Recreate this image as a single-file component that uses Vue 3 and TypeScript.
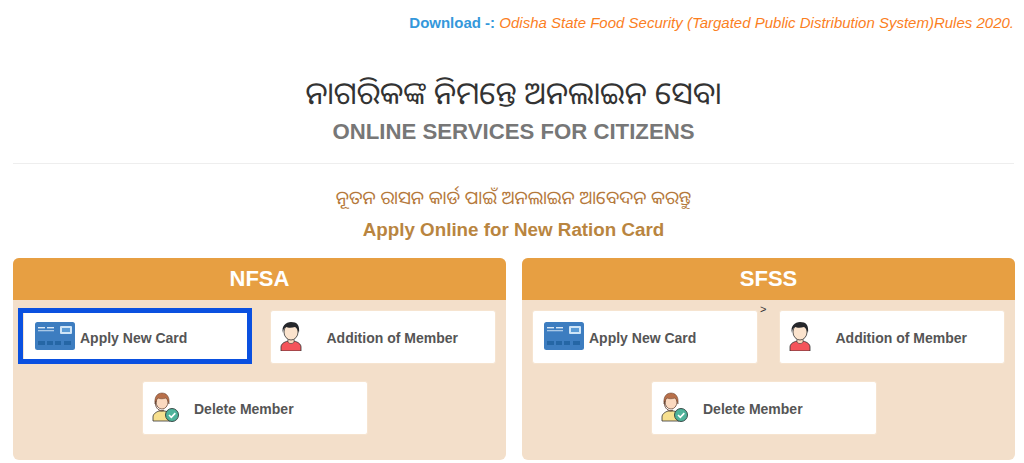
<script setup lang="ts">
interface Item { label: string; icon: 'card' | 'man' | 'agent'; textGap: number; focused?: boolean }
interface Panel { title: string; items: Item[]; caret?: boolean }
const base: Item[] = [
  { label: 'Apply New Card', icon: 'card', textGap: 5 },
  { label: 'Addition of Member', icon: 'man', textGap: 25 },
  { label: 'Delete Member', icon: 'agent', textGap: 15 },
]
const panels: Panel[] = [
  { title: 'NFSA', items: base.map((b, i) => ({ ...b, focused: i === 0 })) },
  { title: 'SFSS', items: base, caret: true },
]
</script>

<template>
  <main class="page">
    <p class="download"><b>Download -:</b> <i>Odisha State Food Security (Targated Public Distribution System)Rules 2020.</i></p>
    <h1 class="odia-title">ନାଗରିକଙ୍କ ନିମନ୍ତେ ଅନଲାଇନ ସେବା</h1>
    <h2 class="subtitle">ONLINE SERVICES FOR CITIZENS</h2>
    <hr class="rule" />
    <h3 class="odia-sub">ନୂତନ ରାସନ କାର୍ଡ ପାଇଁ ଅନଲାଇନ ଆବେଦନ କରନ୍ତୁ</h3>
    <h3 class="apply">Apply Online for New Ration Card</h3>
    <section class="panels">
      <article v-for="p in panels" :key="p.title" class="panel">
        <header class="panel-head">{{ p.title }}</header>
        <div class="panel-body">
          <span v-if="p.caret" class="caret">&gt;</span>
          <a v-for="item in p.items" :key="item.label" class="tile" :class="{ focused: item.focused }">
            <svg v-if="item.icon === 'card'" class="icon" width="40" height="28" viewBox="0 0 40 28">
              <rect x="0" y="0" width="40" height="28" rx="2.5" fill="#3d7dc0" />
              <rect x="3" y="5" width="7" height="1.4" fill="#dbe8f5" />
              <rect x="12" y="5" width="7" height="1.4" fill="#dbe8f5" />
              <rect x="3" y="8" width="16" height="1.3" fill="#a9c8e6" />
              <rect x="25" y="4" width="12" height="8" rx="1" fill="#cfe5f7" />
              <rect x="27" y="6" width="8" height="4" fill="#5b9bd5" />
              <rect x="3" y="19" width="7" height="4" fill="#2566a5" />
              <rect x="12" y="19" width="6" height="4" fill="#2566a5" />
              <rect x="20" y="19" width="6" height="4" fill="#2566a5" />
              <rect x="29" y="19" width="7" height="4" fill="#2566a5" />
            </svg>
            <svg v-else-if="item.icon === 'man'" class="icon shifted" width="22" height="29" viewBox="0 0 22 29">
              <path d="M1 29v-4c0-3 3-5 7-6h6c4 1 7 3 7 6v4z" fill="#f4545a" stroke="#333" stroke-width=".8" />
              <path d="M8 16h6v4c-1 2-5 2-6 0z" fill="#fbdcc0" stroke="#333" stroke-width=".6" />
              <ellipse cx="11" cy="10" rx="7" ry="8" fill="#fbe3cd" stroke="#333" stroke-width=".8" />
              <path d="M3 11C1 4 6 0 11 0c6 0 9 3 8 11-1-3-2-5-4-6-3 1-7 1-9 0-2 1-3 3-3 6z" fill="#25272b" />
            </svg>
            <svg v-else class="icon shifted" width="27" height="30" viewBox="0 0 27 30">
              <path d="M1 29v-4c0-3 3-5 6-6h6c3 1 5 3 5 6v4z" fill="#f7e08f" stroke="#333" stroke-width=".8" />
              <ellipse cx="10" cy="10" rx="6" ry="7" fill="#fbd9bf" stroke="#5b3a2a" stroke-width=".7" />
              <path d="M3 12C2 4 6 1 10 1s8 3 7 11c-1-3-2-5-3-6-3 1-6 1-8 0-1 1-2 3-3 6z" fill="#b8704a" stroke="#5b3a2a" stroke-width=".5" />
              <path d="M4 9c-1 4 0 7 3 9 2 1 4 1 5 0" fill="none" stroke="#5b3a2a" stroke-width=".9" />
              <circle cx="20" cy="23" r="6.5" fill="#4fb39b" stroke="#2d3b3a" stroke-width=".9" />
              <path d="M17 23l2.3 2.3 4-4.2" fill="none" stroke="#fff" stroke-width="1.6" />
            </svg>
            <span class="label" :style="{ marginLeft: item.textGap + 'px' }">{{ item.label }}</span>
          </a>
        </div>
      </article>
    </section>
  </main>
</template>

<style scoped>
.page {
  box-sizing: border-box;
  width: 1024px;
  height: 463px;
  overflow: hidden;
  padding: 14px 10px 0 13px;
  background: #fff;
  font-family: "Liberation Sans", Arial, sans-serif;
  text-align: center;
}
.download {
  margin: 0;
  font-size: 15px;
  line-height: 18px;
  text-align: right;
  color: #fb7f1f;
}
.download b { color: #3498db; }
.odia-title {
  margin: 38px 0 0;
  font-size: 31px;
  line-height: 44px;
  font-weight: 400;
  color: #333;
  font-family: "Noto Sans Oriya", "Noto Sans", "Liberation Sans", sans-serif;
}
.subtitle {
  margin: 6px 0 0;
  font-size: 22.2px;
  line-height: 24px;
  color: #777;
}
.rule {
  margin: 19px 0 0;
  border: 0;
  border-top: 1px solid #eee;
}
.odia-sub {
  margin: 19px 0 0;
  font-size: 18.5px;
  line-height: 28px;
  font-weight: 400;
  color: #b5793b;
  font-family: "Noto Sans Oriya", "Noto Sans", "Liberation Sans", sans-serif;
}
.apply {
  margin: 8px 0 0;
  font-size: 18.8px;
  line-height: 22px;
  color: #b9853f;
}
.panels {
  display: flex;
  gap: 16px;
  margin-top: 17px;
  width: 1002px;
}
.panel {
  flex: 0 0 493px;
  height: 202px;
  border-radius: 6px;
  overflow: hidden;
  background: #f3dfca;
}
.panel-head {
  height: 42px;
  line-height: 41px;
  background: #e79f42;
  color: #fff;
  font-size: 22px;
  font-weight: 700;
}
.panel-body {
  position: relative;
  display: grid;
  grid-template-columns: 226px 226px;
  gap: 17px 20.5px;
  padding: 10px 0 0 10px;
}
.caret {
  position: absolute;
  left: 238px;
  top: 3px;
  font-size: 11px;
  color: #333;
}
.tile {
  position: relative;
  box-sizing: border-box;
  display: flex;
  align-items: center;
  height: 54px;
  padding-left: 11px;
  background: #fff;
  border: 1px solid #f6e4d0;
  border-radius: 3px;
  color: #555;
  font-size: 14px;
  font-weight: 700;
  text-align: left;
}
.tile:nth-of-type(3) {
  grid-column: 1 / 3;
  width: 226px;
  margin-left: 119px;
}
.tile.focused::after {
  content: "";
  position: absolute;
  inset: -3px -4px -1px -6px;
  border: 5px solid #0a50e0;
}
.icon { flex: none; margin-top: -2px; }
.icon.shifted { margin-left: -2px; }
.label { white-space: nowrap; padding-top: 2px; }
</style>
